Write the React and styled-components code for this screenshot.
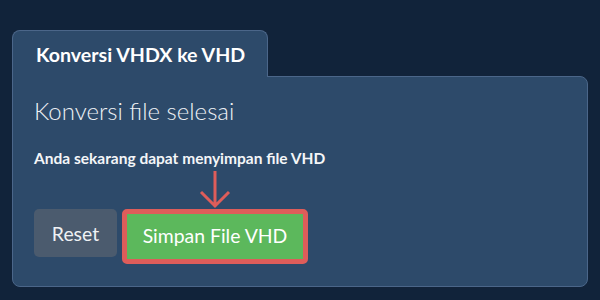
import React from "react";
import styled, { createGlobalStyle } from "styled-components";

const Global = createGlobalStyle`
  html, body { margin: 0; padding: 0; background: #11233a; }
  body { font-family: Lato, "Open Sans", sans-serif; color: #f2f4f7; }
`;

const Page = styled.div`
  width: 600px;
  height: 300px;
  box-sizing: border-box;
  padding: 30px 0 0 12px;
  background: #11233a;
`;

const Tab = styled.div`
  position: relative;
  z-index: 1;
  box-sizing: border-box;
  width: 256px;
  height: 47px;
  margin-bottom: -1px;
  padding: 0 0 0 23px;
  display: flex;
  align-items: center;
  background: #2d4a6a;
  border: 1px solid #4b6689;
  border-bottom: none;
  border-radius: 8px 8px 0 0;
  font-weight: 700;
  font-size: 19.6px;
  color: #ffffff;
`;

const Panel = styled.div`
  box-sizing: border-box;
  width: 576px;
  height: 211px;
  padding: 20px 20px 0 21px;
  background: #2d4a6a;
  border: 1px solid #4b6689;
  border-radius: 0 8px 8px 8px;
`;

const Heading = styled.h2`
  margin: 0;
  font-weight: 300;
  font-size: 24px;
  line-height: 1.2;
  color: #eef1f5;
`;

const Note = styled.p`
  margin: 23px 0 0;
  font-weight: 700;
  font-size: 15.5px;
  line-height: 1.2;
  color: #f4f6f8;
`;

const Actions = styled.div`
  display: grid;
  grid-template-columns: auto auto;
  justify-content: start;
  align-items: start;
  column-gap: 5px;
  margin-top: 2px;
`;

const ArrowCell = styled.div`
  grid-column: 2;
  justify-self: center;
  height: 40px;
  display: flex;
`;

const Button = styled.button`
  box-sizing: border-box;
  font-family: Lato, "Open Sans", sans-serif;
  font-weight: 400;
  font-size: 19.4px;
  line-height: 1;
  color: #ffffff;
  cursor: pointer;
  border-radius: 5px;
`;

const ResetButton = styled(Button)`
  width: 83px;
  height: 48px;
  border: none;
  background: #4b5b6e;
  color: #eef1f4;
`;

const SaveButton = styled(Button)`
  width: 186px;
  height: 55px;
  border: 5px solid #de5d5a;
  background: #5cb85c;
  padding: 0 0 3px 0;
`;

export default function App() {
  return (
    <>
      <Global />
      <Page>
        <Tab>Konversi VHDX ke VHD</Tab>
        <Panel>
          <Heading>Konversi file selesai</Heading>
          <Note>Anda sekarang dapat menyimpan file VHD</Note>
          <Actions>
            <ArrowCell>
              <svg width="32" height="40" viewBox="0 0 32 40">
                <path
                  d="M16 2 V37 M2 23 L16 37 L30 23"
                  fill="none"
                  stroke="#de5d5a"
                  strokeWidth="3"
                />
              </svg>
            </ArrowCell>
            <ResetButton>Reset</ResetButton>
            <SaveButton>Simpan File VHD</SaveButton>
          </Actions>
        </Panel>
      </Page>
    </>
  );
}
